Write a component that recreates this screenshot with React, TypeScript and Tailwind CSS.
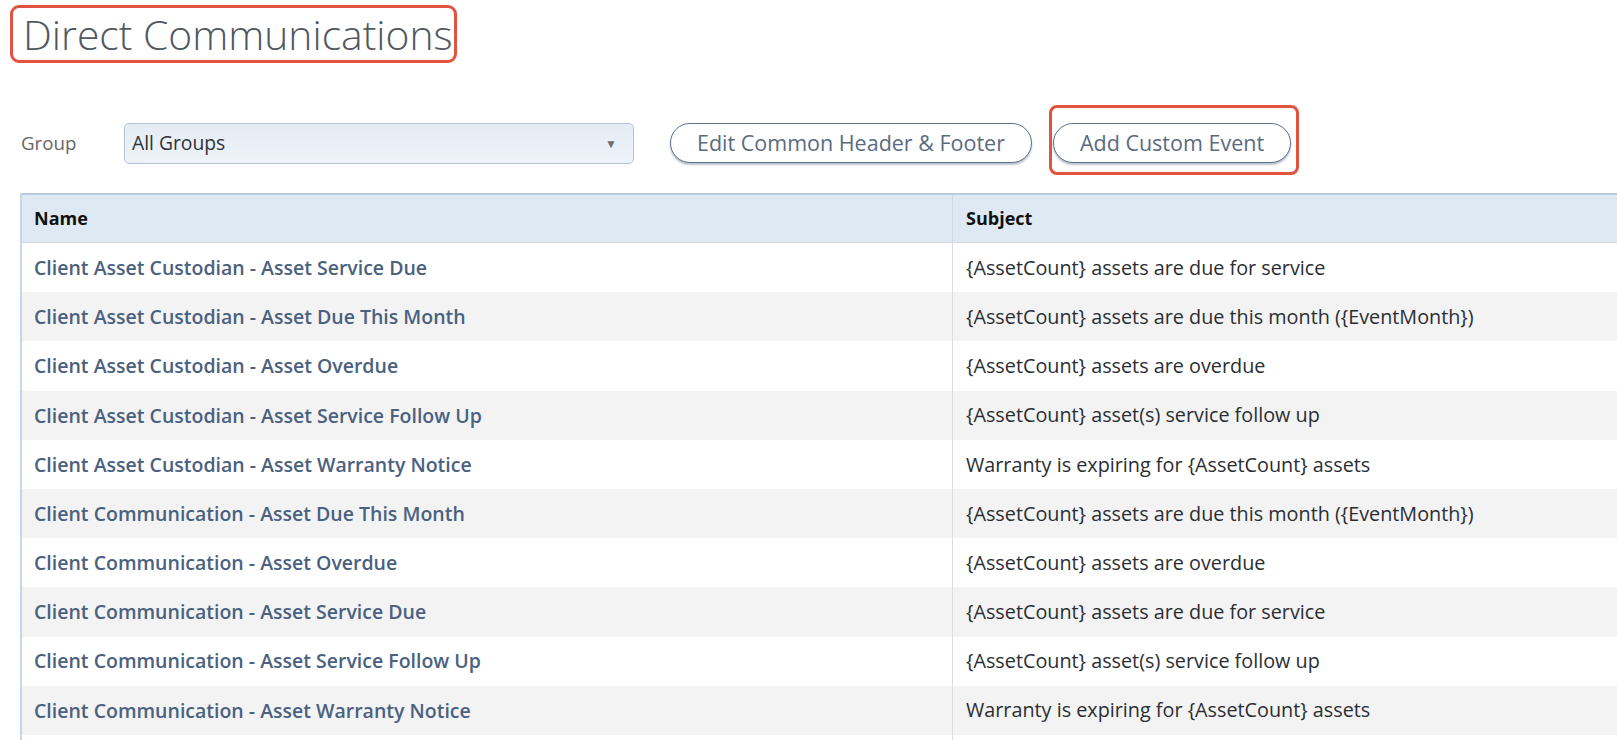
import React from "react";

const rows: [string, string][] = [
  ["Client Asset Custodian - Asset Service Due", "{AssetCount} assets are due for service"],
  ["Client Asset Custodian - Asset Due This Month", "{AssetCount} assets are due this month ({EventMonth})"],
  ["Client Asset Custodian - Asset Overdue", "{AssetCount} assets are overdue"],
  ["Client Asset Custodian - Asset Service Follow Up", "{AssetCount} asset(s) service follow up"],
  ["Client Asset Custodian - Asset Warranty Notice", "Warranty is expiring for {AssetCount} assets"],
  ["Client Communication - Asset Due This Month", "{AssetCount} assets are due this month ({EventMonth})"],
  ["Client Communication - Asset Overdue", "{AssetCount} assets are overdue"],
  ["Client Communication - Asset Service Due", "{AssetCount} assets are due for service"],
  ["Client Communication - Asset Service Follow Up", "{AssetCount} asset(s) service follow up"],
  ["Client Communication - Asset Warranty Notice", "Warranty is expiring for {AssetCount} assets"],
  ["", ""],
];

export default function App() {
  return (
    <div
      className="w-[1617px] h-[740px] overflow-hidden bg-white"
      style={{ fontFamily: '"Open Sans", "Noto Sans", sans-serif' }}
    >
      <div className="pt-[5px] pl-[10px]">
        <div className="flex items-center w-[447px] h-[58px] border-[3px] border-[#e2533f] rounded-[9px] pl-[10px]">
          <h1 className="text-[40.8px] font-light text-[#50575e] leading-none whitespace-nowrap">
            Direct Communications
          </h1>
        </div>
      </div>

      <div className="flex items-start mt-[42px] pl-[21px]">
        <div className="mt-[18px] h-[41px] w-[103px] flex items-center text-[18.7px] text-[#666]">
          Group
        </div>
        <div className="mt-[18px] w-[510px] h-[41px] rounded-[5px] border border-[#b3c4d6] bg-gradient-to-b from-[#e5ecf5] to-[#eef3f9] flex items-center justify-between pl-[7px] pr-[16px]">
          <span className="text-[19.3px] text-[#2e3338]">All Groups</span>
          <span className="text-[12px] text-[#6a6f75]">▼</span>
        </div>
        <button className="ml-[36px] mt-[18px] w-[362px] h-[40px] rounded-full border-[1.5px] border-[#5c718a] shadow-[0_2px_2px_rgba(60,80,110,0.35)] bg-white text-[21.5px] text-[#5a6b80] flex items-center justify-center whitespace-nowrap">
          Edit Common Header &amp; Footer
        </button>
        <div className="ml-[17px] w-[250px] h-[70px] border-[3px] border-[#e2533f] rounded-[8px] pl-[1px] pt-[15px]">
          <button className="w-[238px] h-[40px] rounded-full border-[1.5px] border-[#5c718a] shadow-[0_2px_2px_rgba(60,80,110,0.35)] bg-white text-[21.5px] text-[#5a6b80] flex items-center justify-center whitespace-nowrap">
            Add Custom Event
          </button>
        </div>
      </div>

      <div className="mt-[18px] ml-[20px] w-[1640px] border-l-2 border-[#c9d6e3]">
        <div className="flex h-[50px] bg-[#dfe9f3] border-t-2 border-[#b9cbdc] border-b border-b-[#d3dbe3]">
          <div className="w-[931px] shrink-0 border-r border-[#cfd9e3] flex items-center pl-[12px] text-[18px] font-bold text-[#111]">
            Name
          </div>
          <div className="flex-1 flex items-center pl-[13px] text-[18px] font-bold text-[#111]">
            Subject
          </div>
        </div>
        {rows.map(([name, subject], i) => (
          <div
            key={i}
            className={`flex h-[49.2px] ${i % 2 === 1 ? "bg-[#f3f3f3]" : "bg-white"}`}
          >
            <div className="w-[931px] shrink-0 border-r border-[#d9dee3] flex items-center pl-[12px] text-[19.5px] font-semibold text-[#4a6180] whitespace-nowrap">
              {name}
            </div>
            <div className="flex-1 flex items-center pl-[13px] text-[19.8px] text-[#2a2e33] whitespace-nowrap">
              {subject}
            </div>
          </div>
        ))}
      </div>
    </div>
  );
}
